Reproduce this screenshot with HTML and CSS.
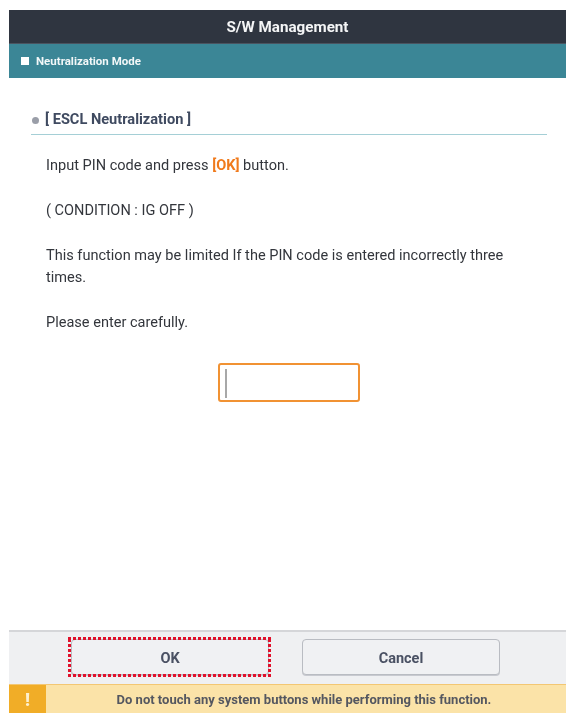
FILE: index.html
```html
<!DOCTYPE html>
<html lang="en">
<head>
<meta charset="utf-8">
<title>S/W Management</title>
<link rel="stylesheet" href="styles.css">
</head>
<body>
<div class="screen">
  <header class="title">S/W Management</header>
  <div class="mode"><span class="mode-mark"></span>Neutralization Mode</div>
  <main class="content">
    <h2 class="heading"><span class="dot"></span>[ ESCL Neutralization ]</h2>
    <div class="text">
      <p>Input PIN code and press <b class="ok">[OK]</b> button.</p>
      <p>( CONDITION : IG OFF )</p>
      <p>This function may be limited If the PIN code is entered incorrectly three times.</p>
      <p>Please enter carefully.</p>
    </div>
    <div class="pin-row"><div class="pin"><span class="caret"></span></div></div>
  </main>
  <div class="buttons">
    <button class="btn focused">OK</button>
    <button class="btn">Cancel</button>
  </div>
  <div class="warning">
    <span class="warn-icon">!</span>
    <span class="warn-text">Do not touch any system buttons while performing this function.</span>
  </div>
</div>
</body>
</html>
```
FILE: styles.css
```css
* { box-sizing: border-box; }
html, body { margin: 0; height: 100%; background: #fff; }
body { padding: 10px 11px 10px 9px; font-family: Roboto, "Liberation Sans", sans-serif; }
.screen { height: 703px; display: flex; flex-direction: column; filter: blur(0.3px); }
.title {
  height: 34px; background: #2f3540; color: #f4f5f6; border-bottom: 1px solid #4a5460;
  font-size: 15.2px; font-weight: 700; display: flex; align-items: center; justify-content: center; padding-top: 1px;
}
.mode {
  height: 34px; background: #3b8696; color: #f2f7f8; font-size: 11.5px; font-weight: 700;
  display: flex; align-items: center; padding-left: 12px;
}
.mode-mark { width: 8px; height: 8px; background: #fff; margin-right: 7px; }
.content { flex: 1; padding: 30px 19px 0 22px; }
.heading {
  margin: 0; height: 27px; border-bottom: 1px solid #a5cfd6; color: #3f4a60;
  font-size: 14.6px; font-weight: 700; display: flex; align-items: flex-start; line-height: 22px;
}
.dot { width: 7px; height: 7px; border-radius: 50%; background: #9a9ea8; margin: 9px 6px 0 1px; }
.text { padding: 20px 18px 0 15px; font-size: 14.55px; line-height: 22px; color: #33363c; }
.text p { margin: 0 0 23px; }
.ok { color: #f07a1c; font-weight: 700; }
.pin-row { display: flex; justify-content: center; margin-top: 29px; padding-right: 1px; }
.pin {
  width: 142px; height: 39px; border: 2px solid #f19233; border-radius: 3px; background: #fff;
  padding: 4px 0 0 5px;
}
.caret { display: block; width: 2px; height: 29px; background: #a8a8a8; }
.buttons {
  height: 54px; background: #eff0f2; border-top: 2px solid #d5d6d9;
  display: flex; gap: 33px; padding: 7px 0 0 62px;
}
.btn {
  position: relative; width: 198px; height: 36px; background: #f0f1f3; border: 1px solid #b9bcc2; border-radius: 4px;
  color: #4a5163; font: 700 14.5px Roboto, "Liberation Sans", sans-serif; padding: 2px 0 0;
  box-shadow: 0 1px 0 #c8cad0;
}
.focused::after {
  content: ""; position: absolute; inset: -3px -3px -3px -4px;
  background:
    repeating-linear-gradient(90deg, #e0112b 0 3px, transparent 3px 5px) top / 100% 3px no-repeat,
    repeating-linear-gradient(90deg, #e0112b 0 3px, transparent 3px 5px) bottom / 100% 3px no-repeat,
    repeating-linear-gradient(0deg, #e0112b 0 3px, transparent 3px 5px) left / 3px 100% no-repeat,
    repeating-linear-gradient(0deg, #e0112b 0 3px, transparent 3px 5px) right / 3px 100% no-repeat;
}
.warning {
  height: 29px; background: #fbe3a8; border-top: 1px solid #f3c773;
  display: flex; align-items: center;
}
.warn-icon {
  width: 37px; height: 100%; background: #f1ad27; color: #fdf0cf; font-size: 18px; font-weight: 900;
  display: flex; align-items: center; justify-content: center;
}
.warn-text { flex: 1; text-align: center; font-size: 13px; font-weight: 700; color: #545760; padding-right: 41px; margin-left: 37px; }
```
